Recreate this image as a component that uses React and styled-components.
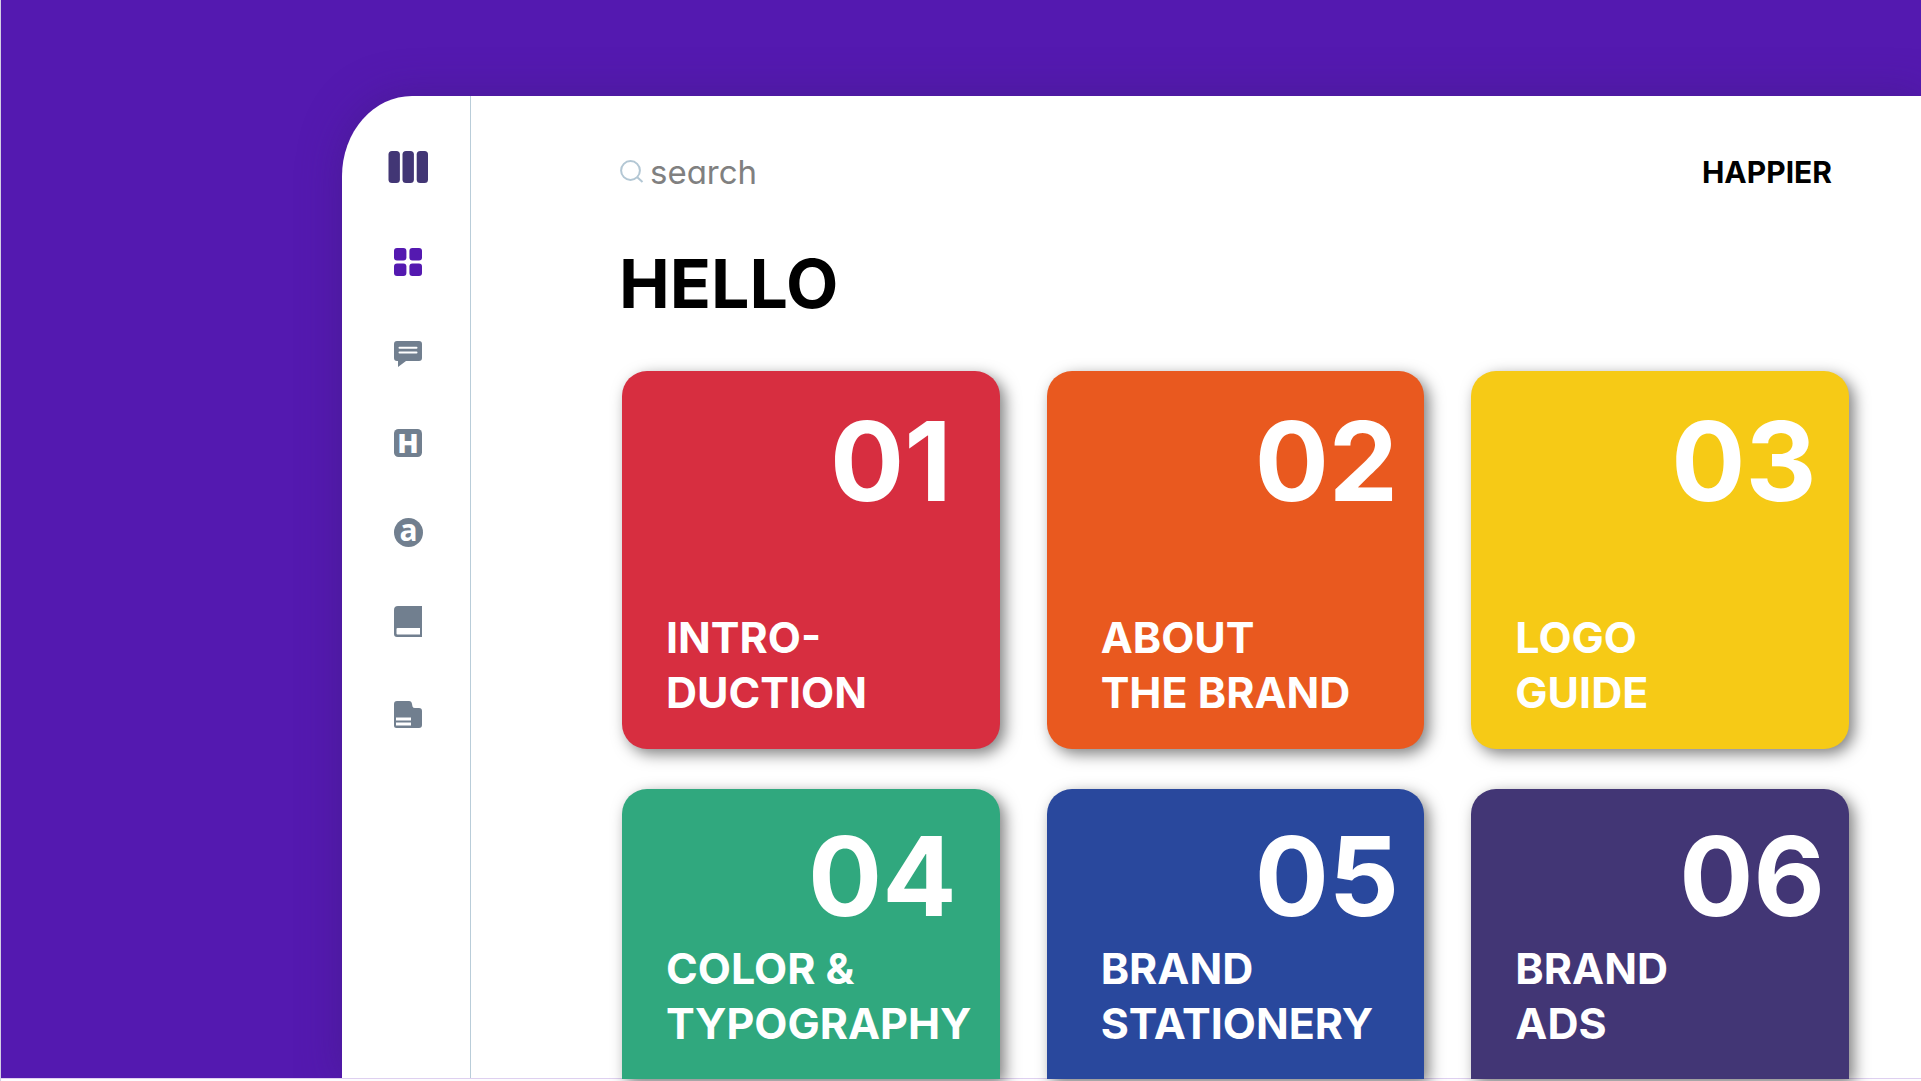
import styled, { createGlobalStyle } from 'styled-components';

const GlobalStyle = createGlobalStyle`
  * {
    box-sizing: border-box;
  }
  body {
    margin: 0;
    background: #fdfcfe;
    font-family: Inter, 'Open Sans', sans-serif;
  }
`

const Page = styled.div`
  display: flex;
  flex-direction: column;
  min-height: 100vh;
  border-left: 1px solid #d3cde4;
  overflow: hidden;
`

const Stage = styled.div`
  flex: 1;
  display: flex;
  padding: 96px 0 0 341px;
  background: #5419b0;
`

// sits above the panel's shadow but below the cards' shadows
const Edge = styled.div`
  position: relative;
  z-index: 0;
  height: 3px;
  border-top: 1px solid #ded0f0;
  background: #fdfcfe;
`

const Panel = styled.div`
  flex: 1;
  min-width: 0;
  display: flex;
  background: #fff;
  border-top-left-radius: 70px 80px;
  box-shadow: 0 0 40px rgba(64, 29, 124, 0.5);
`

const Sidebar = styled.aside`
  flex: none;
  width: 129px;
  padding: 55px 0 0 4px;
  display: flex;
  flex-direction: column;
  align-items: center;
  border-right: 1px solid #b9cdd9;
`

const Logo = styled.svg`
  display: block;
  width: 40px;
  height: 32px;
  fill: #423675;
`

const Nav = styled.nav`
  display: flex;
  flex-direction: column;
  gap: 58px;
  margin-top: 63px;
`

const NavButton = styled.button`
  width: 32px;
  height: 32px;
  padding: 0;
  border: 0;
  background: none;
  color: ${({ $active }) => ($active ? '#5419b0' : '#717f8f')};
  cursor: pointer;

  svg {
    display: block;
    fill: currentColor;
    overflow: visible;
  }
`

const Main = styled.main`
  flex: 1;
  min-width: 0;
  display: flex;
  flex-direction: column;
  padding: 54px 72px 0 151px;
`

const Header = styled.header`
  display: flex;
  align-items: center;
  justify-content: space-between;
  height: 44px;
  padding-right: 17px;
`

const SearchBox = styled.label`
  display: flex;
  align-items: center;
  gap: 6px;
  margin-left: -2px;

  svg {
    fill: none;
    stroke: #b3c7d4;
    stroke-width: 2;
  }
`

const SearchInput = styled.input`
  width: 320px;
  padding: 0;
  border: 0;
  outline: 0;
  background: none;
  font: 400 33px/44px Inter, sans-serif;
  font-feature-settings: 'cv11';
  color: #333;

  &::placeholder {
    color: #808080;
    opacity: 1;
  }
`

const Brand = styled.a`
  font-size: 30px;
  font-weight: 700;
  line-height: 44px;
  color: #000;
  text-decoration: none;
`

const Title = styled.h1`
  margin: 47px 0 46px -3px;
  font-size: 68px;
  font-weight: 700;
  line-height: 84px;
  color: #000;
`

const Cards = styled.div`
  flex: 1;
  display: grid;
  grid-template-columns: repeat(3, 1fr);
  grid-template-rows: auto 1fr;
  gap: 40px 47px;
`

const Card = styled.a`
  position: relative;
  z-index: 1;
  display: flex;
  flex-direction: column;
  justify-content: space-between;
  padding: ${({ $cut }) => ($cut ? '46px 0 28px' : '49px 0 29px')};
  ${({ $cut }) => ($cut ? 'min-height: 290px;' : 'aspect-ratio: 1;')}
  margin-bottom: ${({ $cut }) => ($cut ? '-1px' : '0')};
  border-radius: ${({ $cut }) => ($cut ? '25px 25px 0 0' : '25px')};
  background: ${({ $color }) => $color};
  box-shadow: 5px 5px 15px rgba(0, 0, 0, 0.5);
  color: #fff;
  font-weight: 700;
  text-decoration: none;
`

const Num = styled.span`
  padding-left: ${({ $indent }) => $indent}px;
  font-size: 110px;
  line-height: 82px;
`

const Name = styled.span`
  padding-left: ${({ $indent }) => $indent}px;
  font-size: 43px;
  line-height: 55px;
  white-space: pre-line;
`

const cards = [
  { num: '01', name: 'INTRO-\nDUCTION', color: '#d72e40', numIndent: 208, indent: 44 },
  { num: '02', name: 'ABOUT\nTHE BRAND', color: '#e9591f', numIndent: 208, indent: 54 },
  { num: '03', name: 'LOGO\nGUIDE', color: '#f6ca16', numIndent: 200, indent: 44 },
  { num: '04', name: 'COLOR &\nTYPOGRAPHY', color: '#30a87e', numIndent: 186, indent: 44, cut: true },
  { num: '05', name: 'BRAND\nSTATIONERY', color: '#29489d', numIndent: 208, indent: 54, cut: true },
  { num: '06', name: 'BRAND\nADS', color: '#423675', numIndent: 208, indent: 44, cut: true },
]

const navItems = [
  {
    label: 'Dashboard',
    active: true,
    icon: (
      <>
        <rect x="2" y="2" width="12.4" height="12.6" rx="3" />
        <rect x="17.4" y="2" width="12.6" height="12.6" rx="3" />
        <rect x="2" y="17.6" width="12.4" height="12.4" rx="3" />
        <rect x="17.4" y="17.6" width="12.6" height="12.4" rx="3" />
      </>
    ),
  },
  {
    label: 'Messages',
    icon: (
      <>
        <path d="M5 5h22a3 3 0 0 1 3 3v14a3 3 0 0 1-3 3H14l-8 6v-6H5a3 3 0 0 1-3-3V8a3 3 0 0 1 3-3z" />
        <path d="M7.5 11.7h17M7.5 16.6h17" stroke="#fff" strokeWidth="2" strokeLinecap="round" />
      </>
    ),
  },
  {
    label: 'Headings',
    icon: (
      <>
        <rect x="2" y="3" width="28" height="28" rx="4.5" />
        <text x="16" y="26.5" textAnchor="middle" fontFamily="Inter" fontWeight="900" fontSize="26" fill="#fff">H</text>
      </>
    ),
  },
  {
    label: 'Account',
    icon: (
      <>
        <circle cx="16.5" cy="16.5" r="14.5" />
        <text x="16.5" y="25" textAnchor="middle" fontFamily="'Liberation Sans Narrow', 'Open Sans'" fontWeight="700" fontSize="30" fill="#fff">a</text>
      </>
    ),
  },
  {
    label: 'Library',
    icon: (
      <path
        fillRule="evenodd"
        d="M6 0h24v31H5a3 3 0 0 1-3-3V4a4 4 0 0 1 4-4zM5.5 22a1 1 0 0 0-1 1v4.500a1 1 0 0 0 1 1h22.500V22z"
      />
    ),
  },
  {
    label: 'Files',
    icon: (
      <path
        fillRule="evenodd"
        d="M5 5h12q2.600 0 3 3l.5 2.500q.5 1.500 2.500 1.500h4a3 3 0 0 1 3 3v14a3 3 0 0 1-3 3H4.500A2.500 2.500 0 0 1 2 29.500V8a3 3 0 0 1 3-3zM4 21.500v3h15v-3zM4 26.500v3h15v-3z"
      />
    ),
  },
]

const App = () => {
  return (
    <>
      <GlobalStyle />
      <Page>
        <Stage>
          <Panel>
            <Sidebar>
              <Logo viewBox="0 0 40 32" role="img" aria-label="Happier">
                <rect x="0.500" y="0" width="11.400" height="32" rx="3.500" />
                <rect x="14.500" y="0" width="11.400" height="32" rx="3.500" />
                <rect x="28.700" y="0" width="11.300" height="32" rx="3.500" />
              </Logo>
              <Nav>
                {navItems.map((item) => (
                  <NavButton key={item.label} type="button" aria-label={item.label} $active={item.active}>
                    <svg width="32" height="32" viewBox="0 0 32 32">{item.icon}</svg>
                  </NavButton>
                ))}
              </Nav>
            </Sidebar>
            <Main>
              <Header>
                <SearchBox>
                  <svg width="24" height="24" viewBox="0 0 24 24">
                    <circle cx="10.500" cy="10.500" r="9.400" />
                    <path d="M17 17l5.500 5" />
                  </svg>
                  <SearchInput type="text" placeholder="search" aria-label="search" />
                </SearchBox>
                <Brand href="#">HAPPIER</Brand>
              </Header>
              <Title>HELLO</Title>
              <Cards>
                {cards.map((card) => (
                  <Card key={card.num} href={`#${card.num}`} $color={card.color} $cut={card.cut}>
                    <Num $indent={card.numIndent}>{card.num}</Num>
                    <Name $indent={card.indent}>{card.name}</Name>
                  </Card>
                ))}
              </Cards>
            </Main>
          </Panel>
        </Stage>
        <Edge />
      </Page>
    </>
  );
};

export default App;
